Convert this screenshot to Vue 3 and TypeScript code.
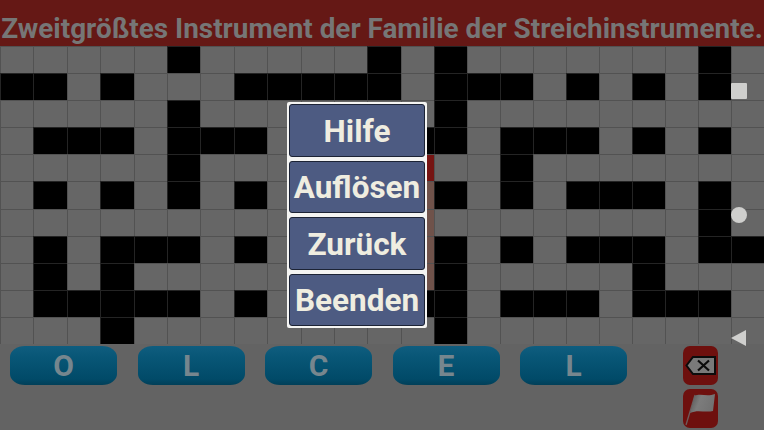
<script setup lang="ts">
const COLS = 23
const blackRows: number[][] = [
  [5, 11, 13, 21],
  [0, 1, 3, 7, 8, 9, 10, 11, 13, 14, 15, 17, 19, 21],
  [5, 13],
  [1, 2, 3, 5, 6, 7, 12, 13, 15, 16, 17, 19, 21],
  [5, 15],
  [1, 3, 5, 7, 13, 15, 17, 18, 19, 21],
  [21],
  [1, 3, 4, 5, 7, 13, 15, 17, 18, 19, 21, 22],
  [1, 3, 13, 19],
  [1, 2, 3, 4, 5, 7, 12, 13, 15, 16, 17, 19, 20, 21],
  [3, 13],
]
const cells = blackRows.flatMap((blacks, r) =>
  Array.from({ length: COLS }, (_, c) => ({
    id: `${r}-${c}`,
    black: blacks.includes(c),
    selected: c === 12 && r === 4,
    word: c === 12 && r > 4 && r < 9,
  })),
)
const letters = ['O', 'L', 'C', 'E', 'L']
const menu = ['Hilfe', 'Auflösen', 'Zurück', 'Beenden']
</script>

<template>
  <div class="screen">
    <header class="clue">Zweitgrößtes Instrument der Familie der Streichinstrumente.</header>
    <div class="grid">
      <div
        v-for="cell in cells"
        :key="cell.id"
        class="cell"
        :class="{ black: cell.black, selected: cell.selected, word: cell.word }"
      ></div>
    </div>
    <div class="bottom">
      <div class="letters">
        <button v-for="(l, i) in letters" :key="i" class="letter">{{ l }}</button>
      </div>
      <div class="actions">
        <button class="action">
          <svg width="32" height="22" viewBox="0 0 32 22">
            <path d="M8 2 H30 V19 H8 L1.5 10.5 Z" fill="#7a7a7a" stroke="#0c0c0c" stroke-width="2" />
            <path d="M13 5.5 L24 15.5 M24 5.5 L13 15.5" stroke="#0c0c0c" stroke-width="2.2" fill="none" />
          </svg>
        </button>
        <button class="action">
          <svg width="35" height="38" viewBox="0 0 35 38">
            <defs>
              <linearGradient id="flag" x1="0" y1="0" x2="1" y2="0.3">
                <stop offset="0" stop-color="#505050" />
                <stop offset="0.45" stop-color="#7c7c7c" />
                <stop offset="1" stop-color="#727272" />
              </linearGradient>
            </defs>
            <path d="M3 35 L12 5" stroke="#6e5c5c" stroke-width="1.3" fill="none" />
            <path d="M11.5 6 C17 3 24 7 32 4 L30 21 C22 23 15 19 7 23 Z" fill="url(#flag)" />
          </svg>
        </button>
      </div>
    </div>

    <div class="menu">
      <button v-for="m in menu" :key="m" class="menu-item">{{ m }}</button>
    </div>

    <div class="nav">
      <span class="nav-square"></span>
      <span class="nav-circle"></span>
      <span class="nav-back"></span>
    </div>
  </div>
</template>

<style scoped>
.screen {
  position: relative;
  width: 764px;
  height: 430px;
  overflow: hidden;
  display: flex;
  flex-direction: column;
  background: #636363;
  font-family: Roboto, "Liberation Sans", sans-serif;
}
.clue {
  height: 46px;
  box-sizing: border-box;
  padding-top: 12px;
  background: #651815;
  color: #767676;
  font-size: 27.9px;
  font-weight: 700;
  line-height: 34px;
  white-space: nowrap;
  text-align: center;
}
.grid {
  display: grid;
  grid-template-columns: repeat(13, 33.4px) repeat(10, 33px);
  grid-auto-rows: 27.1px;
  height: 298px;
}
.cell {
  box-sizing: border-box;
  border-left: 1px solid #525252;
  border-top: 1px solid #525252;
  background: #666;
}
.cell.black {
  background: #000;
  border-color: #242424;
}
.cell.selected {
  background: #761412;
}
.cell.word {
  background: #6f524a;
}
.bottom {
  display: flex;
  padding: 2px 46px 0 10px;
  justify-content: space-between;
}
.letters {
  display: flex;
  gap: 20.5px;
}
.letter {
  width: 107px;
  height: 39px;
  border: 0;
  padding: 0;
  border-radius: 15px / 11px;
  background: linear-gradient(#0f5d7f 0, #085676 30%, #014a68 85%, #013f58 100%);
  color: #76868e;
  font: 700 30px Roboto, sans-serif;
  line-height: 39px;
}
.actions {
  display: flex;
  flex-direction: column;
  gap: 4px;
}
.action {
  width: 35px;
  height: 39px;
  border: 0;
  padding: 0;
  border-radius: 7px;
  background: #6e100e;
  display: flex;
  align-items: center;
  justify-content: center;
}
.menu {
  position: absolute;
  left: 287px;
  top: 102px;
  width: 140px;
  height: 226px;
  box-sizing: border-box;
  padding: 2px;
  background: #f4f4f2;
  display: flex;
  flex-direction: column;
  gap: 4px;
  border-radius: 2px;
}
.menu-item {
  flex: 1;
  min-height: 0;
  border: 1px solid #1c2335;
  border-radius: 3px;
  padding: 2px 0 0;
  background: #4d5b82;
  color: #efede0;
  font: 700 31.5px Roboto, sans-serif;
  white-space: nowrap;
}
.nav {
  position: absolute;
  left: 731px;
  top: 83px;
  width: 16px;
  height: 265px;
}
.nav-square {
  position: absolute;
  left: 0;
  top: 0;
  width: 16px;
  height: 16px;
  background: #cfcfcd;
  border-radius: 1px;
}
.nav-circle {
  position: absolute;
  left: 0;
  top: 124px;
  width: 16px;
  height: 16px;
  background: #cfcfcd;
  border-radius: 50%;
}
.nav-back {
  position: absolute;
  left: 0;
  top: 247px;
  width: 0;
  height: 0;
  border-top: 8.5px solid transparent;
  border-bottom: 8.5px solid transparent;
  border-right: 15px solid #cfcfcd;
}
</style>
